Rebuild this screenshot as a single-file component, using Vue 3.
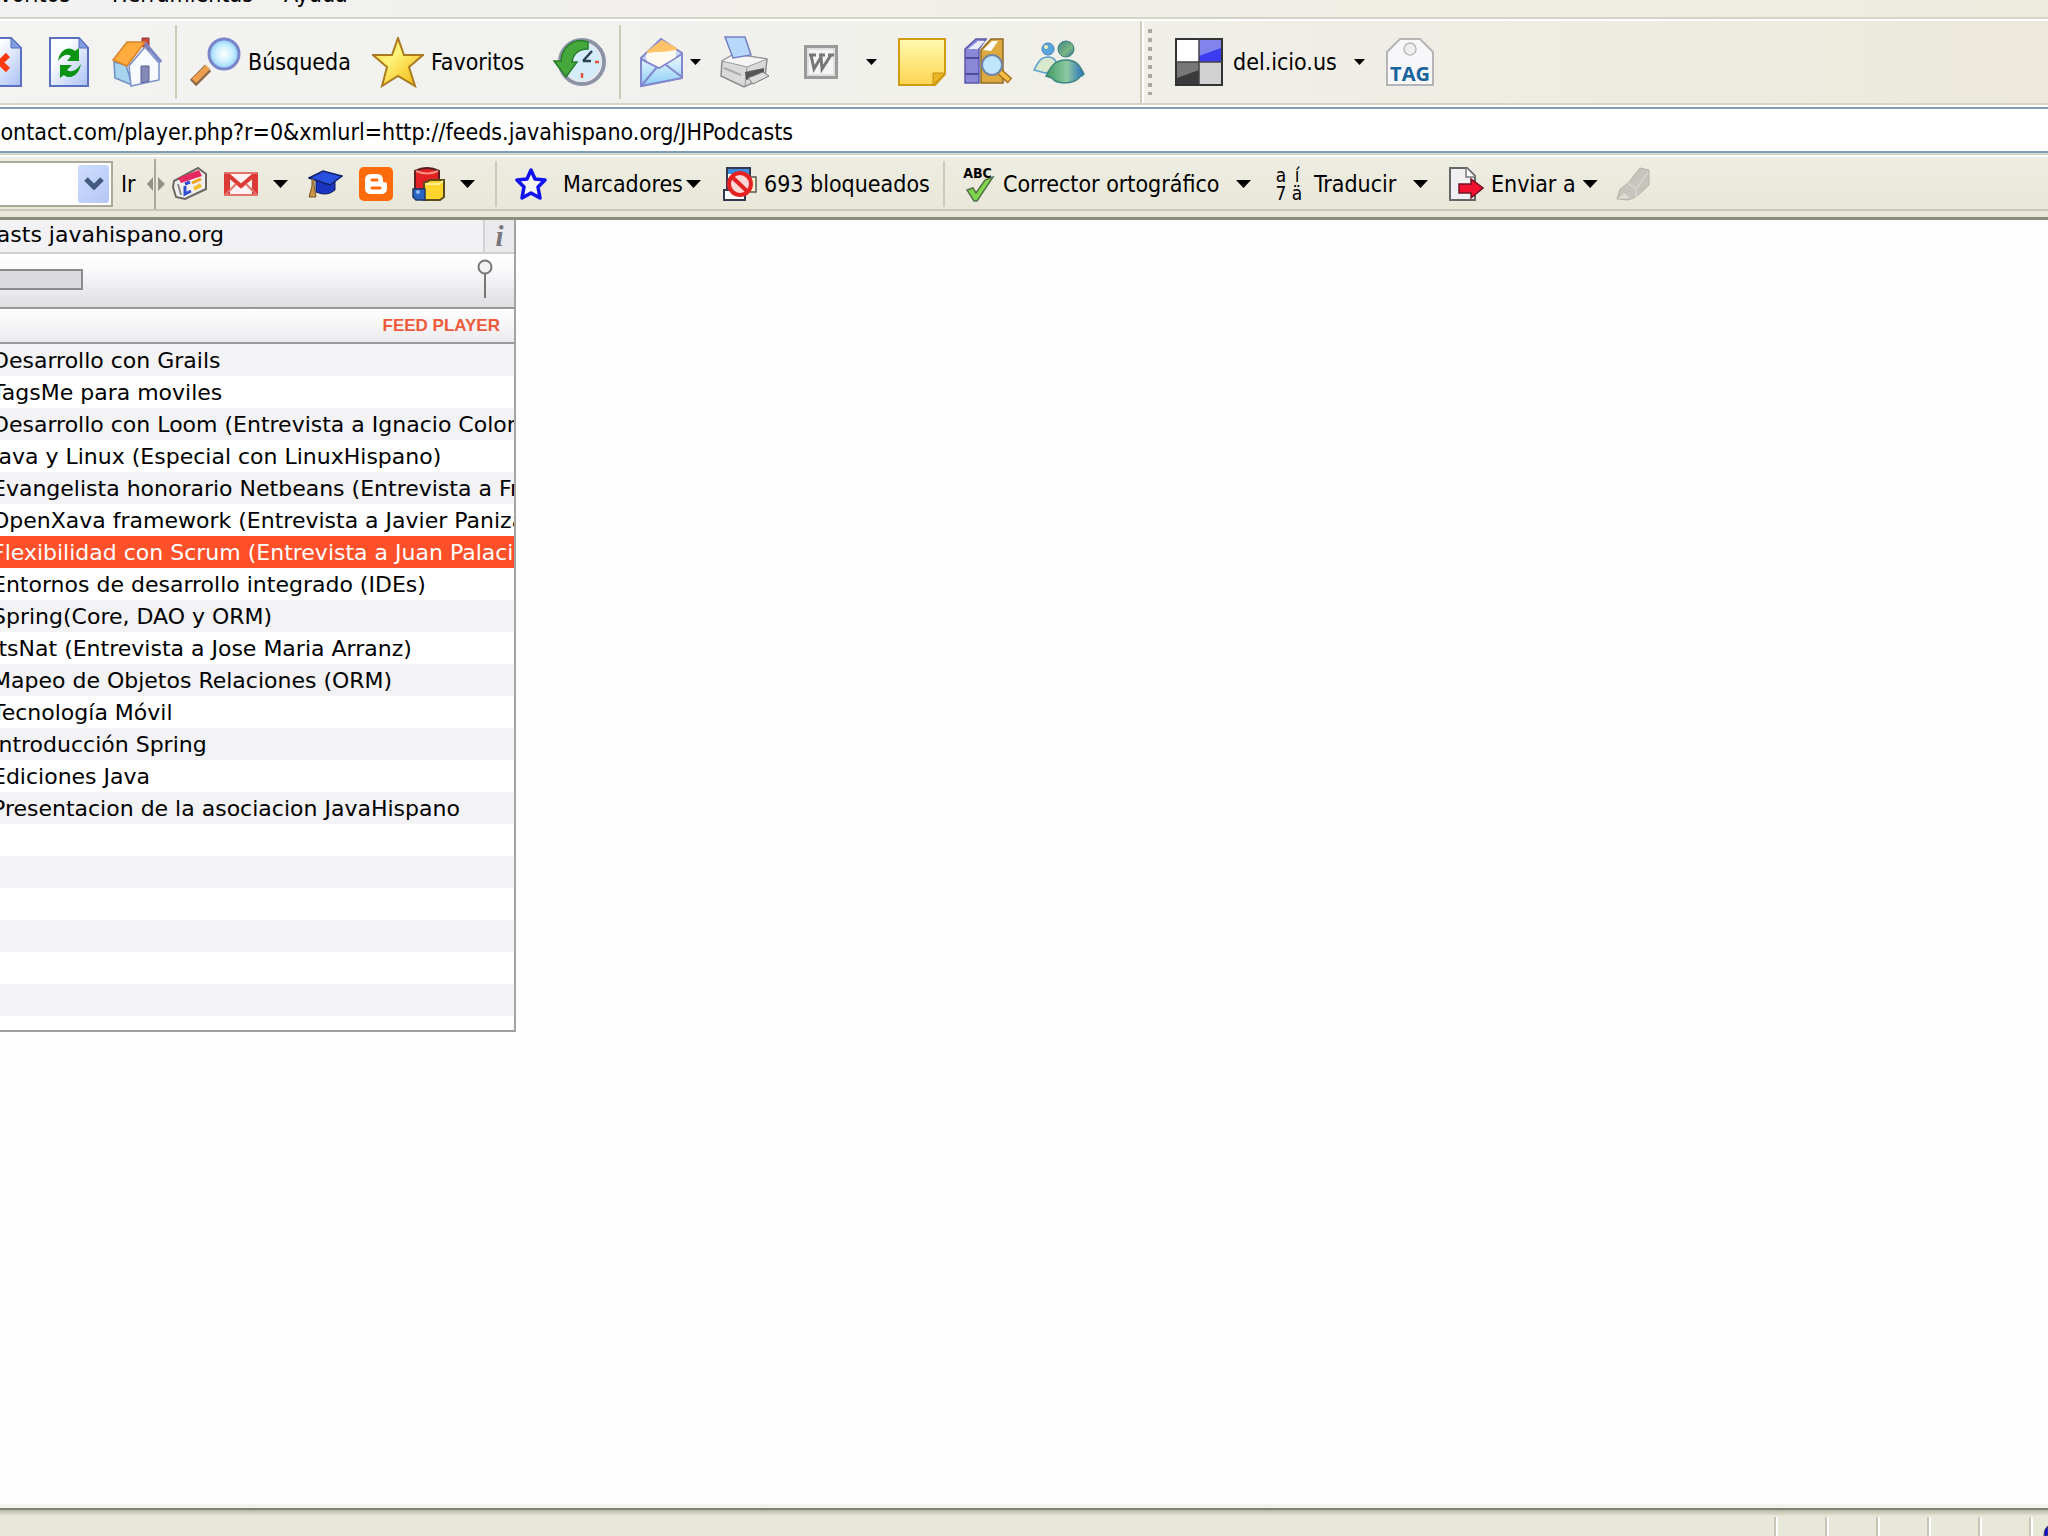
<script setup>
import { ref } from 'vue'

const address = ref('contact.com/player.php?r=0&xmlurl=http://feeds.javahispano.org/JHPodcasts')
const selected = ref(6)
const tracks = [
  'Desarrollo con Grails',
  'TagsMe para moviles',
  'Desarrollo con Loom (Entrevista a Ignacio Colomina)',
  'Java y Linux (Especial con LinuxHispano)',
  'Evangelista honorario Netbeans (Entrevista a Francisco)',
  'OpenXava framework (Entrevista a Javier Paniza)',
  'Flexibilidad con Scrum (Entrevista a Juan Palacio)',
  'Entornos de desarrollo integrado (IDEs)',
  'Spring(Core, DAO y ORM)',
  'ItsNat (Entrevista a Jose Maria Arranz)',
  'Mapeo de Objetos Relaciones (ORM)',
  'Tecnología Móvil',
  'Introducción Spring',
  'Ediciones Java',
  'Presentacion de la asociacion JavaHispano',
]
</script>

<template>
  <div class="browser">
    <nav class="menubar">
      <a href="#" class="m-fav">Favoritos</a>
      <a href="#" class="m-tools">Herramientas</a>
      <a href="#" class="m-help">Ayuda</a>
    </nav>

    <div class="toolbar">
      <button class="stop" aria-label="Detener">
        <svg width="22" height="50" viewBox="0 0 22 50"><path d="M-18 1H11L21 11V49H-18Z" fill="url(#page)" stroke="#5a6fc0" stroke-width="2" /><path d="M11 1V11H21Z" fill="#7f9fe0" stroke="#5a6fc0" /><path d="M-8 18L8 33M8 18L-8 33" stroke="#ff3a12" stroke-width="6" /></svg>
      </button>
      <button class="refresh" aria-label="Actualizar">
        <svg width="40" height="50" viewBox="0 0 40 50">
          <defs>
            <linearGradient id="page" x1="0" y1="0" x2="1" y2="1"><stop offset="0.300" stop-color="#fbfdff" /><stop offset="1" stop-color="#a9c0f5" /></linearGradient>
          </defs>
          <path d="M1 1H30L39 11V49H1Z" fill="url(#page)" stroke="#5a6fc0" stroke-width="2" />
          <path d="M30 1V11H39Z" fill="#7f9fe0" stroke="#5a6fc0" />
          <path d="M9 24C11 11 21 9 26 14L30 11V24H18L22 19C17 16 13 19 9 24Z" fill="#0b9312" />
          <path d="M32 27C30 39 20 43 15 38L11 41V28H23L18 33C23 36 28 33 32 27Z" fill="#0b9312" />
        </svg>
      </button>
      <button class="home" aria-label="Inicio">
        <svg width="50" height="50" viewBox="0 0 50 50">
          <path d="M30 1H37V14L30 9Z" fill="#c8463c" stroke="#8d3a3c" />
          <path d="M2 25L14 28L20 48L3 41Z" fill="#a9d4f0" stroke="#6b8fc4" stroke-width="1.500" />
          <path d="M17 29L33 10L47 26V43L19 49Z" fill="#f7fbff" stroke="#7b8fc8" stroke-width="1.500" />
          <path d="M1 23L15 5L33 5L15 29Z" fill="#ffab3d" stroke="#d9822b" stroke-width="1.500" />
          <path d="M33 6L49 25" stroke="#7a86c6" stroke-width="3" />
          <path d="M29 29H37V44L29 46Z" fill="#8489b5" stroke="#575f96" />
        </svg>
      </button>
      <span class="sep"></span>
      <button class="search">
        <svg width="51" height="51" viewBox="0 0 51 51">
          <defs><radialGradient id="lens"><stop offset="0" stop-color="#fff" /><stop offset="0.600" stop-color="#c7efff" /><stop offset="1" stop-color="#8ecbf5" /></radialGradient></defs>
          <path d="M18 31L3 46" stroke="#8b6a48" stroke-width="9" /><path d="M18 30L4 44" stroke="#f0a04c" stroke-width="6" />
          <circle cx="34" cy="17" r="15" fill="url(#lens)" stroke="#7a86ca" stroke-width="3" />
        </svg>
        <span>Búsqueda</span>
      </button>
      <button class="favs">
        <svg width="52" height="51" viewBox="0 0 52 51">
          <defs><linearGradient id="gold" x1="0" y1="0" x2="1" y2="1"><stop offset="0" stop-color="#ffd93a" /><stop offset="0.400" stop-color="#fff27a" /><stop offset="1" stop-color="#f2b100" /></linearGradient></defs>
          <path d="M26 1L32 18L51 18L37 30L43 49L26 39L10 49L15 30L1 18L20 18Z" fill="url(#gold)" stroke="#a97a20" stroke-width="2" />
        </svg>
        <span>Favoritos</span>
      </button>
      <button class="history" aria-label="Historial">
        <svg width="53" height="50" viewBox="0 0 53 50">
          <circle cx="29" cy="25" r="22" fill="#d5ecfb" stroke="#8b93a5" stroke-width="4" /><circle cx="29" cy="25" r="19" fill="none" stroke="#e4e7ee" stroke-width="2" />
          <path d="M30 24L39 14M30 24H38" stroke="#2d4054" stroke-width="2.500" /><path d="M29 36V41M42 25H46" stroke="#e0553c" stroke-width="2.500" />
          <path d="M35 5C22 0 9 9 8 24H1L13 40L24 25H19C20 17 26 12 35 12Z" fill="#46a83c" stroke="#267c2b" stroke-width="1.500" />
        </svg>
      </button>
      <span class="sep"></span>
      <button class="mail" aria-label="Correo">
        <svg width="45" height="52" viewBox="0 0 45 52">
          <defs><linearGradient id="env" x1="0" y1="0" x2="0" y2="1"><stop offset="0" stop-color="#effbff" /><stop offset="1" stop-color="#8ccdf5" /></linearGradient></defs>
          <path d="M2 22L22 3L43 17V42L2 50Z" fill="#c8d4f8" stroke="#8288cd" stroke-width="2" />
          <path d="M8 15L23 4L38 12L35 25L9 26Z" fill="#ffc46a" /><path d="M7 18Q20 14 37 17L34 26L22 32L8 25Z" fill="#fffaf0" />
          <path d="M2 23L20 32L43 18V42L2 50Z" fill="url(#env)" stroke="#8288cd" stroke-width="2" /><path d="M8 17V25L20 31L37 21V14Q22 17 8 17Z" fill="#fffaf0" /><path d="M3 49L18 31M43 41L27 29" stroke="#8288cd" stroke-width="2" />
        </svg>
        <i class="arrow"></i>
      </button>
      <button class="print" aria-label="Imprimir">
        <svg width="51" height="52" viewBox="0 0 51 52">
          <path d="M3 25L15 18L48 23L46 41L25 51L2 40Z" fill="#dadada" stroke="#8c8c8c" stroke-width="1.500" /><path d="M3 25L15 18L48 23L28 31Z" fill="#f5f5f5" stroke="#999" />
          <path d="M28 31L26 50" stroke="#999" /><path d="M6 1L26 1L32 19L14 22Z" fill="#b7d8fb" stroke="#7480c4" stroke-width="1.500" />
          <path d="M26 36L45 32V38L27 44Z" fill="#555" /><path d="M29 42L44 36L50 40L34 48Z" fill="#ddd" stroke="#777" /><path d="M5 32L22 39" stroke="#aaa" stroke-width="2" />
        </svg>
      </button>
      <button class="word" aria-label="Editar">
        <svg width="34" height="34" viewBox="0 0 34 34"><rect x="1.500" y="1.500" width="31" height="31" fill="#ededed" stroke="#9a9a9a" stroke-width="3" /><rect x="4" y="4" width="26" height="26" fill="#f4f4f4" stroke="#cfcfcf" /><path d="M5 10H12M7 10L10 24L17 12L18 24L27 10M15 10H21M24 10H30" fill="none" stroke="#777" stroke-width="3" /></svg>
        <i class="arrow"></i>
      </button>
      <button class="note" aria-label="Nota">
        <svg width="48" height="48" viewBox="0 0 48 48"><defs><linearGradient id="yel" x1="0" y1="0" x2="0" y2="1"><stop offset="0" stop-color="#fffbb0" /><stop offset="1" stop-color="#ffd451" /></linearGradient></defs><path d="M1 1H47V36L37 47H1Z" fill="url(#yel)" stroke="#d09c14" stroke-width="2" /><path d="M35 47V35H47Z" fill="#e8b526" stroke="#c79212" /></svg>
      </button>
      <button class="books" aria-label="Referencia">
        <svg width="48" height="48" viewBox="0 0 48 48">
          <path d="M1 11L12 1H22L15 11V45H1Z" fill="#8a86d8" stroke="#5b58a8" stroke-width="1.500" /><path d="M4 11L14 3H21L14 11Z" fill="#e8ecff" /><path d="M1 20H15M1 36H15" stroke="#4f4a9b" stroke-width="2" />
          <path d="M17 12L27 1H39V45H17Z" fill="#dca93f" stroke="#8d6b26" stroke-width="1.500" /><path d="M19 12L28 3H34L27 13Z" fill="#fff" />
          <path d="M36 34L46 43" stroke="#a9731d" stroke-width="7" /><path d="M36 34L45 42" stroke="#f5bd48" stroke-width="4" />
          <circle cx="28" cy="27" r="10" fill="#bfe6fa" stroke="#7283aa" stroke-width="2" />
        </svg>
      </button>
      <button class="people" aria-label="Messenger">
        <svg width="52" height="44" viewBox="0 0 52 44">
          <defs>
            <linearGradient id="msn" x1="0" y1="0" x2="1" y2="0"><stop offset="0" stop-color="#3f9d62" /><stop offset="0.550" stop-color="#8cc9a0" /><stop offset="1" stop-color="#2b6fc2" /></linearGradient>
            <linearGradient id="head" x1="0" y1="0" x2="1" y2="1"><stop offset="0" stop-color="#3f7f8c" /><stop offset="0.600" stop-color="#79b880" /><stop offset="1" stop-color="#2f6fa8" /></linearGradient>
          </defs>
          <circle cx="15" cy="9" r="6" fill="#5aa6dd" stroke="#3a7cb8" /><circle cx="13" cy="7" r="2" fill="#f3f1b8" /><path d="M1 30C5 22 8 17 15 17S24 21 24 31L12 33Z" fill="#d9e8cc" stroke="#5c9fd0" stroke-width="1.500" />
          <circle cx="33" cy="9" r="8" fill="url(#head)" stroke="#3d7f80" /><path d="M13 36C18 26 22 20 33 20S47 26 51 34C48 38 47 35 46 38C40 44 24 45 19 38Z" fill="url(#msn)" stroke="#3d8580" stroke-width="1.500" />
        </svg>
      </button>
      <span class="band-end"></span>
      <span class="grip"></span>
      <button class="delicious">
        <svg width="48" height="48" viewBox="0 0 48 48"><rect width="48" height="48" fill="#fff" /><rect x="1" y="1" width="46" height="46" fill="#fff" stroke="#333" stroke-width="2" /><rect x="24" y="2" width="22" height="22" fill="#3b3bf0" /><path d="M24 2H46V10L24 18Z" fill="#8383ee" /><rect x="2" y="24" width="22" height="22" fill="#3a3a3a" /><path d="M2 24H24V32L2 40Z" fill="#777" /><rect x="24" y="24" width="22" height="22" fill="#d2d2d2" /><path d="M24 1V47M1 24H47" stroke="#444" stroke-width="1.500" /></svg>
        <span>del.icio.us</span>
        <i class="arrow"></i>
      </button>
      <button class="tag">
        <svg width="48" height="48" viewBox="0 0 48 48"><path d="M1 47V14L14 1H34L47 14V47Z" fill="#f7f7f9" stroke="#b5b5b8" stroke-width="2" /><circle cx="24" cy="11" r="6" fill="#efefef" stroke="#bbb" stroke-width="1.500" /></svg>
        <span>TAG</span>
      </button>
    </div>

    <div class="addressbar">
      <input v-model="address" type="text" aria-label="Dirección" />
    </div>

    <div class="linksbar">
      <label class="combo" aria-label="Buscar">
        <select><option value=""></option></select>
        <span class="drop"><svg width="20" height="14" viewBox="0 0 20 14"><path d="M2 2L10 10L18 2" fill="none" stroke="#44597f" stroke-width="5" /></svg></span>
      </label>
      <button class="go">Ir</button>
      <span class="splitter"><svg width="18" height="50" viewBox="0 0 18 50"><path d="M8 0V50" stroke="#aaa99c" stroke-width="2" /><path d="M0 25L6 18V32ZM18 25L11 18V32Z" fill="#929288" /></svg></span>
      <button class="news" aria-label="Noticias">
        <svg width="36" height="34" viewBox="0 0 36 34"><path d="M2 14L26 1L34 7V22L13 32L4 30L1 20Z" fill="#f2f0ee" stroke="#6c6663" stroke-width="2" /><path d="M6 11L27 3L30 9L9 16Z" fill="#e5285f" /><path d="M13 19V27L19 24M13 17L18 15" stroke="#2b4fd0" stroke-width="3" fill="none" /><path d="M20 16L29 12" stroke="#f0a020" stroke-width="3" /><path d="M22 22L29 18" stroke="#f0c030" stroke-width="4" /><path d="M6 17L9 28" stroke="#888" stroke-width="2" /></svg>
      </button>
      <button class="gmail" aria-label="Gmail">
        <svg width="34" height="24" viewBox="0 0 34 24"><rect width="34" height="24" fill="#fff2f0" /><path d="M3 24V0M31 0V24" stroke="#dc3a36" stroke-width="6" /><path d="M3 2L17 14L31 2" fill="none" stroke="#dc3a36" stroke-width="4" /><path d="M0 1H34M0 24L12 12M34 24L22 12M0 23H34" stroke="#e4736e" stroke-width="2" /></svg>
        <i class="arrow big"></i>
      </button>
      <button class="scholar" aria-label="Académico">
        <svg width="35" height="28" viewBox="0 0 35 28"><path d="M8 11V22Q19 27 27 20V10Z" fill="#1a35c0" stroke="#101c58" /><path d="M1 8L15 1L34 6L22 15Z" fill="#2a50e0" stroke="#15206a" stroke-width="1.500" /><path d="M4 9V16L1 27H8L6 15V10" fill="#c99548" stroke="#74542a" /></svg>
      </button>
      <button class="blogger" aria-label="Blogger">
        <svg width="34" height="34" viewBox="0 0 34 34"><rect width="34" height="34" rx="5" fill="#ff6a0a" /><path d="M12 7H18Q24 7 24 13V15Q28 15 28 17V21Q28 27 22 27H12Q6 27 6 21V13Q6 7 12 7Z" fill="#fff" /><path d="M13 13H18M13 21H21" stroke="#ff6a0a" stroke-width="3" stroke-linecap="round" /></svg>
      </button>
      <button class="blocks" aria-label="Más">
        <svg width="33" height="35" viewBox="0 0 33 35"><path d="M3 4Q15-2 27 4V22H3Z" fill="#e32024" stroke="#5a2020" stroke-width="2" /><path d="M4 4Q15 9 26 4" stroke="#ff8d82" stroke-width="2" fill="none" /><path d="M12 16L18 13H32V30L28 33H12Z" fill="#ffd42c" stroke="#5c4a18" stroke-width="2" /><path d="M13 17H27L31 14" stroke="#fff095" stroke-width="2" fill="none" /><path d="M1 22H13V33H4L1 30Z" fill="#2c66c4" stroke="#203763" stroke-width="1.500" /><circle cx="6" cy="25" r="2" fill="#8ebbf0" /></svg>
        <i class="arrow big"></i>
      </button>
      <span class="sep t1"></span>
      <button class="marks">
        <svg width="32" height="34" viewBox="0 0 32 34"><path d="M16 3L20 12L30 13L23 20L25 31L16 26L7 31L9 20L2 13L12 12Z" fill="#f4f4f0" stroke="#1212f0" stroke-width="3.500" stroke-linejoin="round" /></svg>
        <span>Marcadores</span>
        <i class="arrow big"></i>
      </button>
      <button class="popup">
        <svg width="34" height="34" viewBox="0 0 34 34"><rect x="4" y="1" width="23" height="20" fill="#fff" stroke="#333850" stroke-width="2" /><rect x="5" y="2" width="21" height="5" fill="#3c8de0" /><rect x="1" y="23" width="21" height="10" fill="#fff" stroke="#333850" stroke-width="2" /><path d="M27 10H33V25H27" fill="#fff6cc" stroke="#555" stroke-width="1.500" /><circle cx="17" cy="17" r="11" fill="#ffd8d5" stroke="#e52222" stroke-width="4" /><path d="M9 10L25 25" stroke="#e52222" stroke-width="4" /></svg>
        <span>693 bloqueados</span>
      </button>
      <span class="sep t2"></span>
      <button class="spell">
        <span class="abc"><b>ABC</b><svg width="30" height="26" viewBox="0 0 30 26"><path d="M2 14L8 12L11 17L20 4L28 1L12 25H9Z" fill="#7ed84c" stroke="#56704c" stroke-width="1.500" /></svg></span>
        <span>Corrector ortográfico</span>
        <i class="arrow big"></i>
      </button>
      <button class="translate">
        <span class="glyphs"><b>a</b><b>í</b><b>7</b><b>ä</b></span>
        <span>Traducir</span>
        <i class="arrow big"></i>
      </button>
      <button class="send">
        <svg width="35" height="35" viewBox="0 0 35 35"><path d="M1 1H18L26 9V33H1Z" fill="#f0f0f2" stroke="#666" stroke-width="2" /><path d="M17 1V10H26" fill="#fff" stroke="#777" stroke-width="1.500" /><path d="M10 17H22V12L34 21L22 31V26H10Z" fill="#f01230" stroke="#701425" stroke-width="1.500" /></svg>
        <span>Enviar a</span>
        <i class="arrow big"></i>
      </button>
      <button class="marker" aria-label="Resaltar">
        <svg width="34" height="34" viewBox="0 0 34 34"><path d="M1 32L4 22L12 16L24 1L33 3V18L20 30L12 33Z" fill="#c5c5bd" stroke="#b4b3aa" /><path d="M12 16L20 22L32 5M20 22V30" stroke="#d4d3ca" stroke-width="2" fill="none" /><path d="M2 32L8 26L14 31Z" fill="#dddcd4" /></svg>
      </button>
    </div>

    <main class="page">
      <section class="player">
        <header class="head">
          <h1>Podcasts javahispano.org</h1>
          <button class="info" aria-label="Información">i</button>
        </header>
        <div class="controls">
          <div class="progress"></div>
          <button class="volume" aria-label="Volumen">
            <svg width="16" height="40" viewBox="0 0 16 40"><path d="M8 15V39" stroke="#777" stroke-width="2" /><circle cx="8" cy="8" r="6.500" fill="#f2f2f2" stroke="#777" stroke-width="2" /></svg>
          </button>
        </div>
        <div class="brand">FEED PLAYER</div>
        <ol class="tracks">
          <li v-for="(t, i) in tracks" :key="t" :class="{ on: i === selected }" @click="selected = i">{{ t }}</li>
        </ol>
      </section>
    </main>

    <footer class="status">
      <span v-for="n in 6" :key="n" class="cell"></span>
      <svg width="5" height="19" viewBox="0 0 5 19"><path d="M5 9C2 11 1 14 1 19H5Z" fill="#0c0cd8" stroke="#555" /></svg>
    </footer>
  </div>
</template>

<style>
body { margin: 0; }
</style>

<style scoped>
.browser {
  display: flex;
  flex-direction: column;
  min-height: 100vh;
  overflow: hidden;
  background: #fefefe;
  color: #000;
  font-family: "DejaVu Sans Condensed", "Open Sans", sans-serif;
  font-size: 23px;
  line-height: 26px;
}
button {
  display: flex;
  flex: none;
  align-items: center;
  padding: 0;
  border: 0;
  background: none;
  color: inherit;
  font: inherit;
  white-space: nowrap;
}
svg { display: block; flex: none; overflow: hidden; }
.menubar {
  display: flex;
  height: 17px;
  overflow: hidden;
  background: linear-gradient(90deg, #f2f2f2, #f0eee6 60%, #eeebdf);
}
.menubar a { flex: none; margin-top: -19px; color: inherit; text-decoration: none; }
.m-fav { width: 112px; text-indent: -23px; }
.m-tools { width: 172px; }

.toolbar {
  display: flex;
  align-items: center;
  height: 82px;
  padding-top: 2px;
  border-top: 2px solid #d3d3c6;
  border-bottom: 2px solid #d6d5c5;
  box-shadow: inset 0 2px #fff;
  background: linear-gradient(90deg, #f3f3f2, #f0efe9 55%, #ece9db);
}
.sep { flex: none; width: 2px; height: 74px; background: #cccbb9; }
.refresh { margin-left: 27px; }
.home { margin-left: 23px; }
.toolbar .sep { margin-left: 13px; }
.search { width: 170px; margin-left: 13px; gap: 7px; }
.favs { width: 168px; margin-left: 12px; gap: 7px; }
.history { margin-left: 13px; }
.mail { width: 62px; margin-left: 18px; justify-content: space-between; }
.print { margin-left: 18px; }
.word { width: 73px; margin-left: 34px; justify-content: space-between; }
.note { margin-left: 21px; }
.books { margin-left: 18px; }
.people { margin-left: 21px; }
.band-end { width: 2px; height: 82px; margin-left: 55px; background: #cfcdbe; border-right: 2px solid #fff; }
.grip { width: 4px; height: 66px; margin-left: 4px; background: repeating-linear-gradient(#aaa99b 0 4px, transparent 4px 9px); }
.delicious { width: 190px; margin-left: 23px; gap: 10px; }
.delicious .arrow { margin-left: auto; }
.tag { position: relative; margin-left: 21px; }
.tag span {
  position: absolute;
  right: 0;
  bottom: 0;
  left: 0;
  color: #17639c;
  font-family: "Open Sans", sans-serif;
  font-size: 20px;
  font-weight: 700;
  line-height: 24px;
}
.arrow { flex: none; width: 11px; height: 6px; background: #000; clip-path: polygon(0 0, 100% 0, 50% 100%); }
.arrow.big { width: 15px; height: 8px; }

.addressbar { padding-top: 2px; background: #fff; }
.addressbar input {
  display: block;
  box-sizing: border-box;
  width: 100%;
  height: 46px;
  padding: 4px 0 0;
  border: solid #7f9db9;
  border-width: 2px 0;
  background: #fff;
  color: #000;
  font: inherit;
  text-indent: -11px;
}
.linksbar {
  display: flex;
  align-items: center;
  box-sizing: border-box;
  height: 67px;
  padding-bottom: 2px;
  border-bottom: 3px solid #8c8b7e;
  background: linear-gradient(#d8d7c8 0 2px, #fff 2px 4px, #eeede2 4px, #e8e7d8 56px, #c8c7b6 56px 58px, #e8e8d8 58px);
}
.linksbar .sep { height: 46px; }
.combo { display: grid; flex: none; width: 113px; height: 46px; }
.combo select {
  grid-area: 1 / 1;
  box-sizing: border-box;
  width: 100%;
  border: solid #aaa99a;
  border-width: 2px 2px 2px 0;
  border-radius: 0;
  appearance: none;
  background: #fff;
}
.drop {
  display: flex;
  grid-area: 1 / 1;
  align-items: center;
  justify-self: end;
  justify-content: center;
  width: 31px;
  margin: 4px;
  border-radius: 3px;
  background: linear-gradient(135deg, #cedcfd, #b5c7f5);
  pointer-events: none;
}
.go { width: 34px; padding-left: 8px; }
.news { margin-left: 7px; }
.gmail { width: 64px; margin-left: 16px; justify-content: space-between; }
.scholar { margin-left: 20px; }
.blogger { margin-left: 16px; }
.blocks { width: 63px; margin-left: 19px; justify-content: space-between; }
.t1 { margin-left: 20px; }
.marks { width: 186px; margin-left: 18px; }
.marks span { margin-left: 16px; }
.marks .arrow, .spell .arrow, .translate .arrow, .send .arrow { margin-left: auto; }
.popup { width: 205px; margin-left: 22px; gap: 7px; }
.t2 { margin-left: 15px; }
.spell { width: 291px; margin-left: 15px; gap: 8px; }
.abc { display: flex; flex-direction: column; width: 35px; }
.abc b { font-size: 14px; line-height: 12px; }
.abc svg { margin: -3px 0 0 5px; }
.translate { width: 156px; margin-left: 21px; gap: 10px; }
.glyphs { display: grid; grid-template-columns: 18px 14px; width: 32px; }
.glyphs b { font-size: 19px; font-weight: 400; line-height: 18px; }
.send { width: 145px; margin-left: 21px; gap: 7px; }
.marker { margin-left: 22px; }

.page { flex: 1; }
.player {
  box-sizing: border-box;
  width: 516px;
  height: 812px;
  overflow: hidden;
  border-right: 2px solid #a3a2a5;
  border-bottom: 2px solid #9c9b9e;
  background: #fff;
  font-family: "DejaVu Sans", sans-serif;
  font-size: 22px;
}
.head { display: flex; justify-content: space-between; height: 32px; border-bottom: 2px solid #d0cfd2; background: #f2f1f4; }
.head h1 {
  display: flex;
  justify-content: flex-end;
  width: 224px;
  margin: 0;
  font-size: 22px;
  font-weight: 400;
  line-height: 30px;
  white-space: nowrap;
}
.info {
  justify-content: center;
  width: 31px;
  border-left: 2px solid #d3d2d5;
  background: #ebeaed;
  color: #77767a;
  font-family: "Liberation Serif", serif;
  font-size: 29px;
  font-style: italic;
  font-weight: 700;
}
.controls {
  display: flex;
  justify-content: space-between;
  height: 53px;
  border-bottom: 2px solid #99989b;
  background: linear-gradient(#fff, #fbfafc 25%, #dfdee1);
}
.progress { width: 81px; height: 17px; margin-top: 15px; border: 2px solid #8b8a8d; border-left: 0; background: #dbdadd; }
.volume { align-self: flex-start; margin: 5px 21px 0 0; }
.brand {
  height: 33px;
  padding-right: 14px;
  border-bottom: 2px solid #99989b;
  background: linear-gradient(#fff, #ebeaed);
  color: #f05a3a;
  font-family: "Liberation Sans", sans-serif;
  font-size: 17px;
  font-weight: 700;
  line-height: 34px;
  text-align: right;
}
.tracks {
  height: 686px;
  margin: 0;
  padding: 0;
  background: repeating-linear-gradient(#f3f2f5 0 32px, #fff 32px 64px);
  list-style: none;
}
.tracks li { height: 32px; line-height: 34px; text-indent: -8px; white-space: nowrap; }
.tracks .on { background: #ff5029; color: #fff; }

.status {
  display: flex;
  justify-content: flex-end;
  box-sizing: border-box;
  height: 32px;
  padding-top: 13px;
  background: linear-gradient(#f4f4ee 0 4px, #808074 4px 6px, #b8b7a6 6px, #e8e8d8 12px);
}
.cell { width: 47px; border-left: 2px solid #c8c7b5; box-shadow: inset 2px 0 #fff; margin-left: 2px; }
.cell:nth-of-type(6) { width: 12px; }
</style>
